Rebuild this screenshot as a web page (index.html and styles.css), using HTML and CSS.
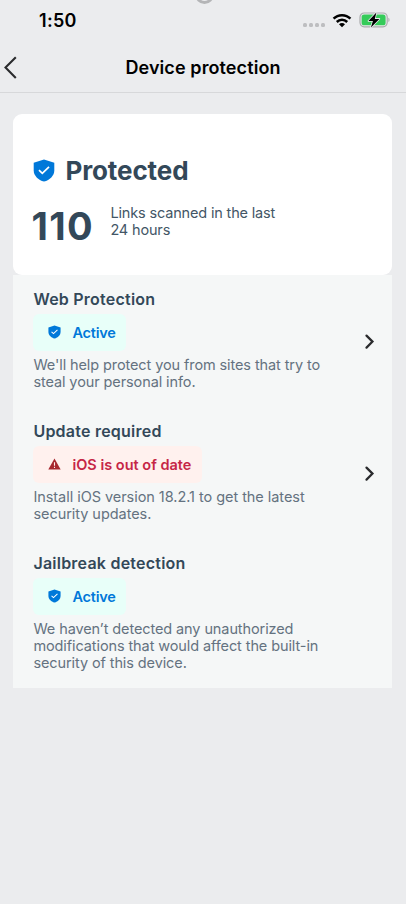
FILE: index.html
```html
<!DOCTYPE html>
<html lang="en">
<head>
<meta charset="utf-8">
<title>Device protection</title>
<link rel="stylesheet" href="styles.css">
</head>
<body>
<svg class="defs" aria-hidden="true">
  <symbol id="shield" viewBox="0 0 22 23">
    <path fill="#0078d9" d="M11 .4 21.300 3.800V11.500C21.300 16.700 16.800 21 11 22.600 5.200 21 .7 16.700 .7 11.500V3.800Z"/>
    <path class="check" d="m6 11.200 3.300 3.100 6.700-6.400"/>
  </symbol>
  <symbol id="chevron" viewBox="0 0 10 16">
    <path d="m1.500 1.600 6 6-6 6" fill="none" stroke="#2a2b2d" stroke-width="2.200" stroke-linecap="round"/>
  </symbol>
</svg>
<div class="island"></div>
<header class="status">
  <span class="time">1:50</span>
  <div class="indicators">
    <div class="dots"><i></i><i></i><i></i><i></i></div>
    <svg class="wifi" width="20" height="15" viewBox="0 0 20 15">
      <g fill="none" stroke="#000" stroke-width="2.500">
        <path d="M1.600 5.700C6.200 1 13.800 1 18.400 5.700"/>
        <path d="M4.800 9C7.700 6.100 12.300 6.100 15.200 9"/>
      </g>
      <path d="M7 11.200C8.700 9.600 11.300 9.600 13 11.200L10 14.200Z"/>
    </svg>
    <svg class="battery" width="32" height="18" viewBox="0 0 32 18">
      <rect x="1" y="2" width="27.200" height="13.800" rx="4.200" fill="none" stroke="#a9aaac" stroke-width="1.200"/>
      <path d="M29.400 6.800c1.500.6 1.500 3.600 0 4.200z" fill="#a9aaac"/>
      <rect x="2.600" y="3.500" width="24" height="10.800" rx="2.600" fill="#34cb59"/>
      <path d="M17.400 1.600 9.400 10h4.500l-2 6.400 8.500-8.500h-4.600Z" fill="#000" stroke="#ebecee" stroke-width="1.600" paint-order="stroke" stroke-linejoin="round"/>
    </svg>
  </div>
</header>
<nav class="nav">
  <svg class="back" width="14" height="24" viewBox="0 0 14 24"><path d="M12.800 1.200 2.500 11.600 12.800 22" fill="none" stroke="#2a2b2d" stroke-width="2.100"/></svg>
  <h1>Device protection</h1>
</nav>
<main>
  <section class="summary">
    <div class="state"><svg class="shield-lg"><use href="#shield"/></svg><h2>Protected</h2></div>
    <div class="scan"><span class="count">110</span><p>Links scanned in the last<br>24 hours</p></div>
  </section>
  <div class="list">
    <article class="item">
      <div>
        <h3>Web Protection</h3>
        <span class="badge"><svg class="shield-sm"><use href="#shield"/></svg><span>Active</span></span>
        <p>We'll help protect you from sites that try to<br>steal your personal info.</p>
      </div>
      <svg class="chev"><use href="#chevron"/></svg>
    </article>
    <article class="item">
      <div>
        <h3>Update required</h3>
        <span class="badge alert"><svg class="warn" viewBox="0 0 13 12"><path fill="#a7282f" d="M6.500.4 12.700 11.500H.3Z"/><path d="M6.500 4.300v3.400M6.500 8.700v1.300" stroke="#fff1ee" stroke-width="1.100"/></svg><span>iOS is out of date</span></span>
        <p class="wide">Install iOS version 18.2.1 to get the latest<br>security updates.</p>
      </div>
      <svg class="chev"><use href="#chevron"/></svg>
    </article>
    <article class="item">
      <div>
        <h3>Jailbreak detection</h3>
        <span class="badge"><svg class="shield-sm"><use href="#shield"/></svg><span>Active</span></span>
        <p>We haven’t detected any unauthorized<br>modifications that would affect the built-in<br>security of this device.</p>
      </div>
    </article>
  </div>
</main>
</body>
</html>
```
FILE: styles.css
```css
* { box-sizing: border-box; }
body, h1, h2, h3, p { margin: 0; }
body {
  height: 904px;
  overflow: hidden;
  background: #ebecee;
  font-family: Inter, "Liberation Sans", sans-serif;
  color: #334859;
}
svg { display: block; flex: none; }
.defs { position: absolute; width: 0; height: 0; }
.island {
  position: absolute;
  top: -15px;
  left: 195px;
  width: 19px;
  height: 19px;
  border: 3px solid #b4b5b7;
  border-radius: 50%;
}
.status {
  height: 42px;
  padding: 0 15px 2px 39px;
  display: flex;
  align-items: center;
  justify-content: space-between;
}
.time { color: #000; font-size: 18px; font-weight: 600; letter-spacing: .3px; }
.indicators { display: flex; align-items: center; }
.dots { display: flex; gap: 2px; margin: 9px 7px 0 0; }
.dots i { width: 4px; height: 4px; border-radius: 1.500px; background: #bdbec0; }
.wifi { margin-right: 7px; }
.nav {
  height: 51px;
  border-bottom: 1px solid #d7d8da;
  padding: 2px 3px 0;
  display: grid;
  grid-template-columns: 14px 1fr 14px;
  align-items: center;
}
.nav h1 { text-align: center; color: #000; font-size: 18px; font-weight: 600; line-height: 24px; letter-spacing: .1px; }
main {
  margin: 21px 13.600px 0 13.400px;
  background: linear-gradient(#ebecee 0 161px, #f5f7f7 161px);
}
.summary { height: 161px; padding: 40px 20px 0; background: #fff; border-radius: 9px; }
.state { display: flex; align-items: center; height: 34px; gap: 10px; }
.shield-lg { width: 22px; height: 23px; margin-top: -2px; }
.check { fill: none; stroke: #fff; stroke-width: 1.700; }
h2 { font-size: 26px; line-height: 34px; font-weight: 700; letter-spacing: -.1px; }
.scan { display: flex; margin-top: 16px; }
.count { width: 79px; margin-left: -2px; font-size: 38px; line-height: 44px; font-weight: 700; letter-spacing: 1.400px; }
.scan p { font-size: 14.500px; line-height: 17.200px; letter-spacing: -.16px; color: #435666; }
.list { padding: 13.500px 0 0 20px; height: 413px; }
.item { display: flex; align-items: flex-start; justify-content: space-between; min-height: 132.200px; padding-right: 17px; }
h3 { font-size: 16px; line-height: 20px; font-weight: 600; letter-spacing: .23px; }
.badge {
  display: flex;
  align-items: center;
  width: 93px;
  height: 37px;
  margin: 5px 0 5px;
  padding-left: 15px;
  gap: 11px;
  border-radius: 6px;
  background: #e8fff9;
  color: #0078d9;
  font-size: 14.500px;
  font-weight: 600;
  letter-spacing: -.2px;
}
.alert { width: 169px; background: #fff1ee; color: #c62646; letter-spacing: 0; }
.shield-sm { width: 13px; height: 14px; }
.warn { width: 13px; height: 12px; }
.item p { color: #647280; font-size: 14.500px; line-height: 17.300px; letter-spacing: -.1px; white-space: nowrap; }
.item .wide { letter-spacing: -.05px; }
.chev { width: 10px; height: 16px; margin-top: 45px; }
```
